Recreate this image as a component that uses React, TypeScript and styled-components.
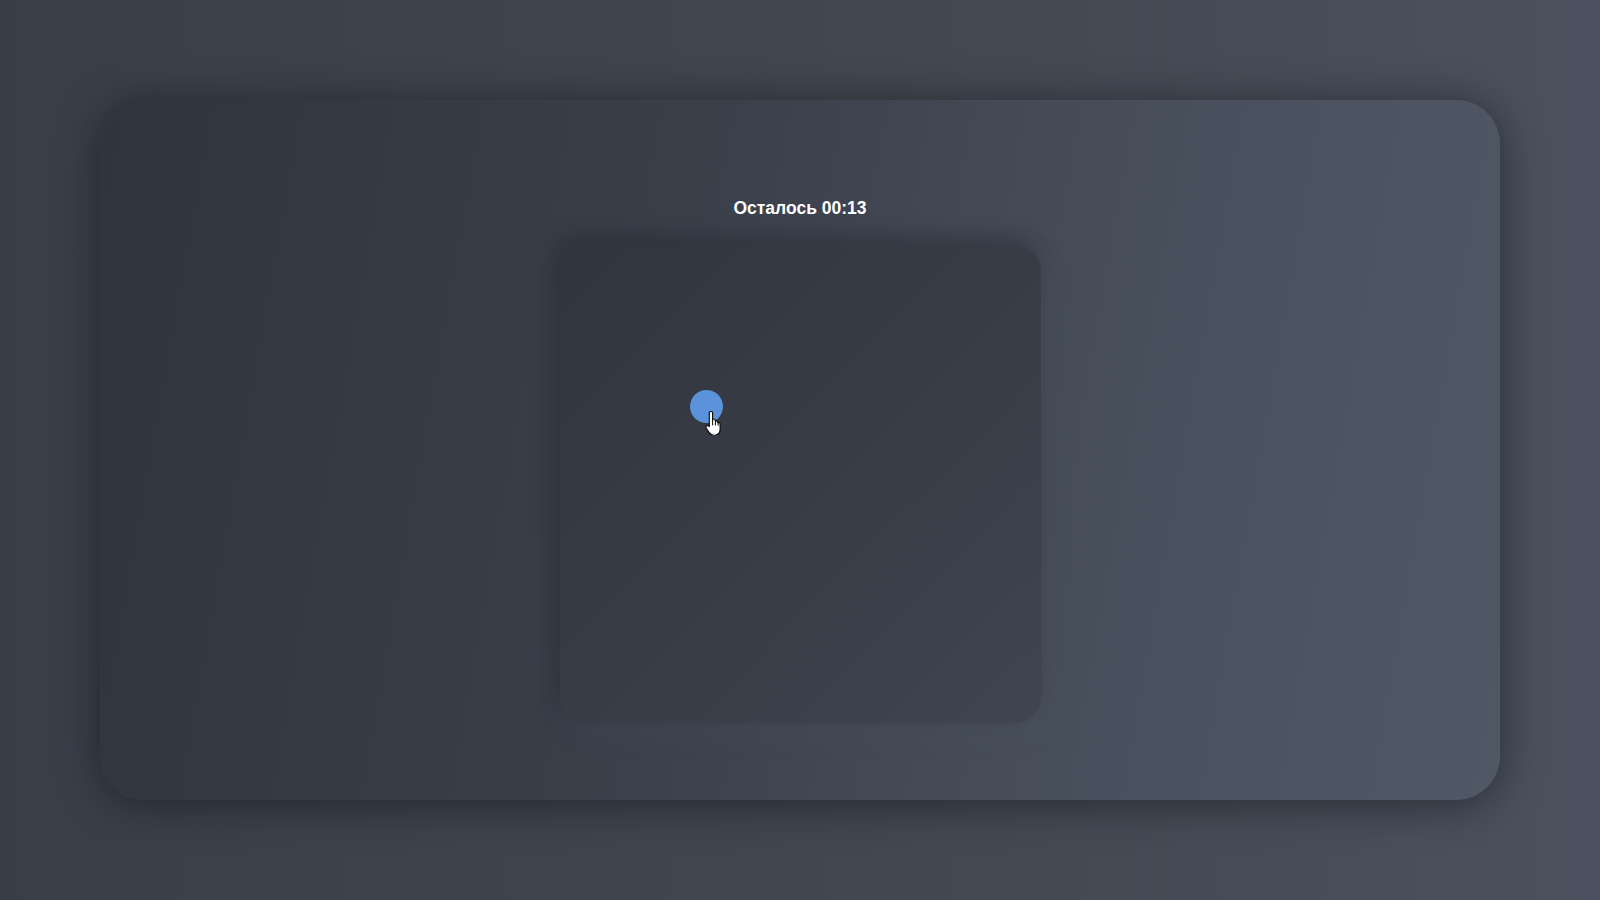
import React from "react";
import styled, { createGlobalStyle } from "styled-components";

const Global = createGlobalStyle`
  html, body { margin: 0; padding: 0; }
  body {
    width: 1600px;
    height: 900px;
    overflow: hidden;
    background: linear-gradient(90deg, #393e49 0%, #41464f 50%, #4b515e 100%);
    font-family: "Liberation Sans", Arial, sans-serif;
  }
`;

const Page = styled.div`
  width: 1600px;
  height: 900px;
  display: flex;
  align-items: center;
  justify-content: center;
`;

const Card = styled.div`
  width: 1400px;
  height: 700px;
  border-radius: 44px;
  background: linear-gradient(100deg, #30343d 0%, #3a3f4a 40%, #4a515e 75%, #505866 100%);
  box-shadow: 0 4px 40px rgba(10, 12, 18, 0.5);
  display: flex;
  flex-direction: column;
  align-items: center;
  padding-top: 97px;
  box-sizing: border-box;
`;

const Timer = styled.div`
  color: #ffffff;
  font-size: 17.5px;
  font-weight: 700;
  line-height: 22px;
`;

const Arena = styled.div`
  position: relative;
  margin-top: 26px;
  width: 481px;
  height: 478px;
  border-radius: 26px;
  background: linear-gradient(135deg, #31353e 0%, #373c46 50%, #3f4551 100%);
  box-shadow: -4px -6px 22px rgba(20, 22, 28, 0.35), 6px 10px 26px rgba(90, 100, 115, 0.22);
`;

const Dot = styled.div`
  position: absolute;
  width: 33px;
  height: 33px;
  border-radius: 50%;
  background: #5b93da;
`;

const Cursor = styled.svg`
  position: absolute;
  width: 19px;
  height: 25px;
`;

export default function App() {
  return (
    <>
      <Global />
      <Page>
        <Card>
          <Timer>Осталось 00:13</Timer>
          <Arena>
            <Dot style={{ left: 130, top: 145 }} />
            <Cursor style={{ left: 145, top: 165 }} viewBox="0 0 16 21">
              <path
                d="M5 1.2c.8 0 1.4.6 1.4 1.4v6.2l.2-1.1c.8-.4 1.8 0 2 .9l.1.8c.7-.5 1.8-.2 2 .7l.1.6c.8-.4 1.8.1 1.9 1v4.6c0 2.6-1.8 4.9-4.6 4.9H7.3c-1.6 0-2.8-.8-3.6-2L1 15.3c-.5-.8-.2-1.8.6-2.1.6-.3 1.3-.1 1.7.4l.3.4V2.6c0-.8.6-1.4 1.4-1.4z"
                fill="#ffffff"
                stroke="#000000"
                strokeWidth="0.9"
                strokeLinejoin="round"
              />
              <path d="M6.4 9v3.6M8.8 9.4v3.2M11.1 10.4v2.4" stroke="#000" strokeWidth="0.8" strokeLinecap="round" />
            </Cursor>
          </Arena>
        </Card>
      </Page>
    </>
  );
}
